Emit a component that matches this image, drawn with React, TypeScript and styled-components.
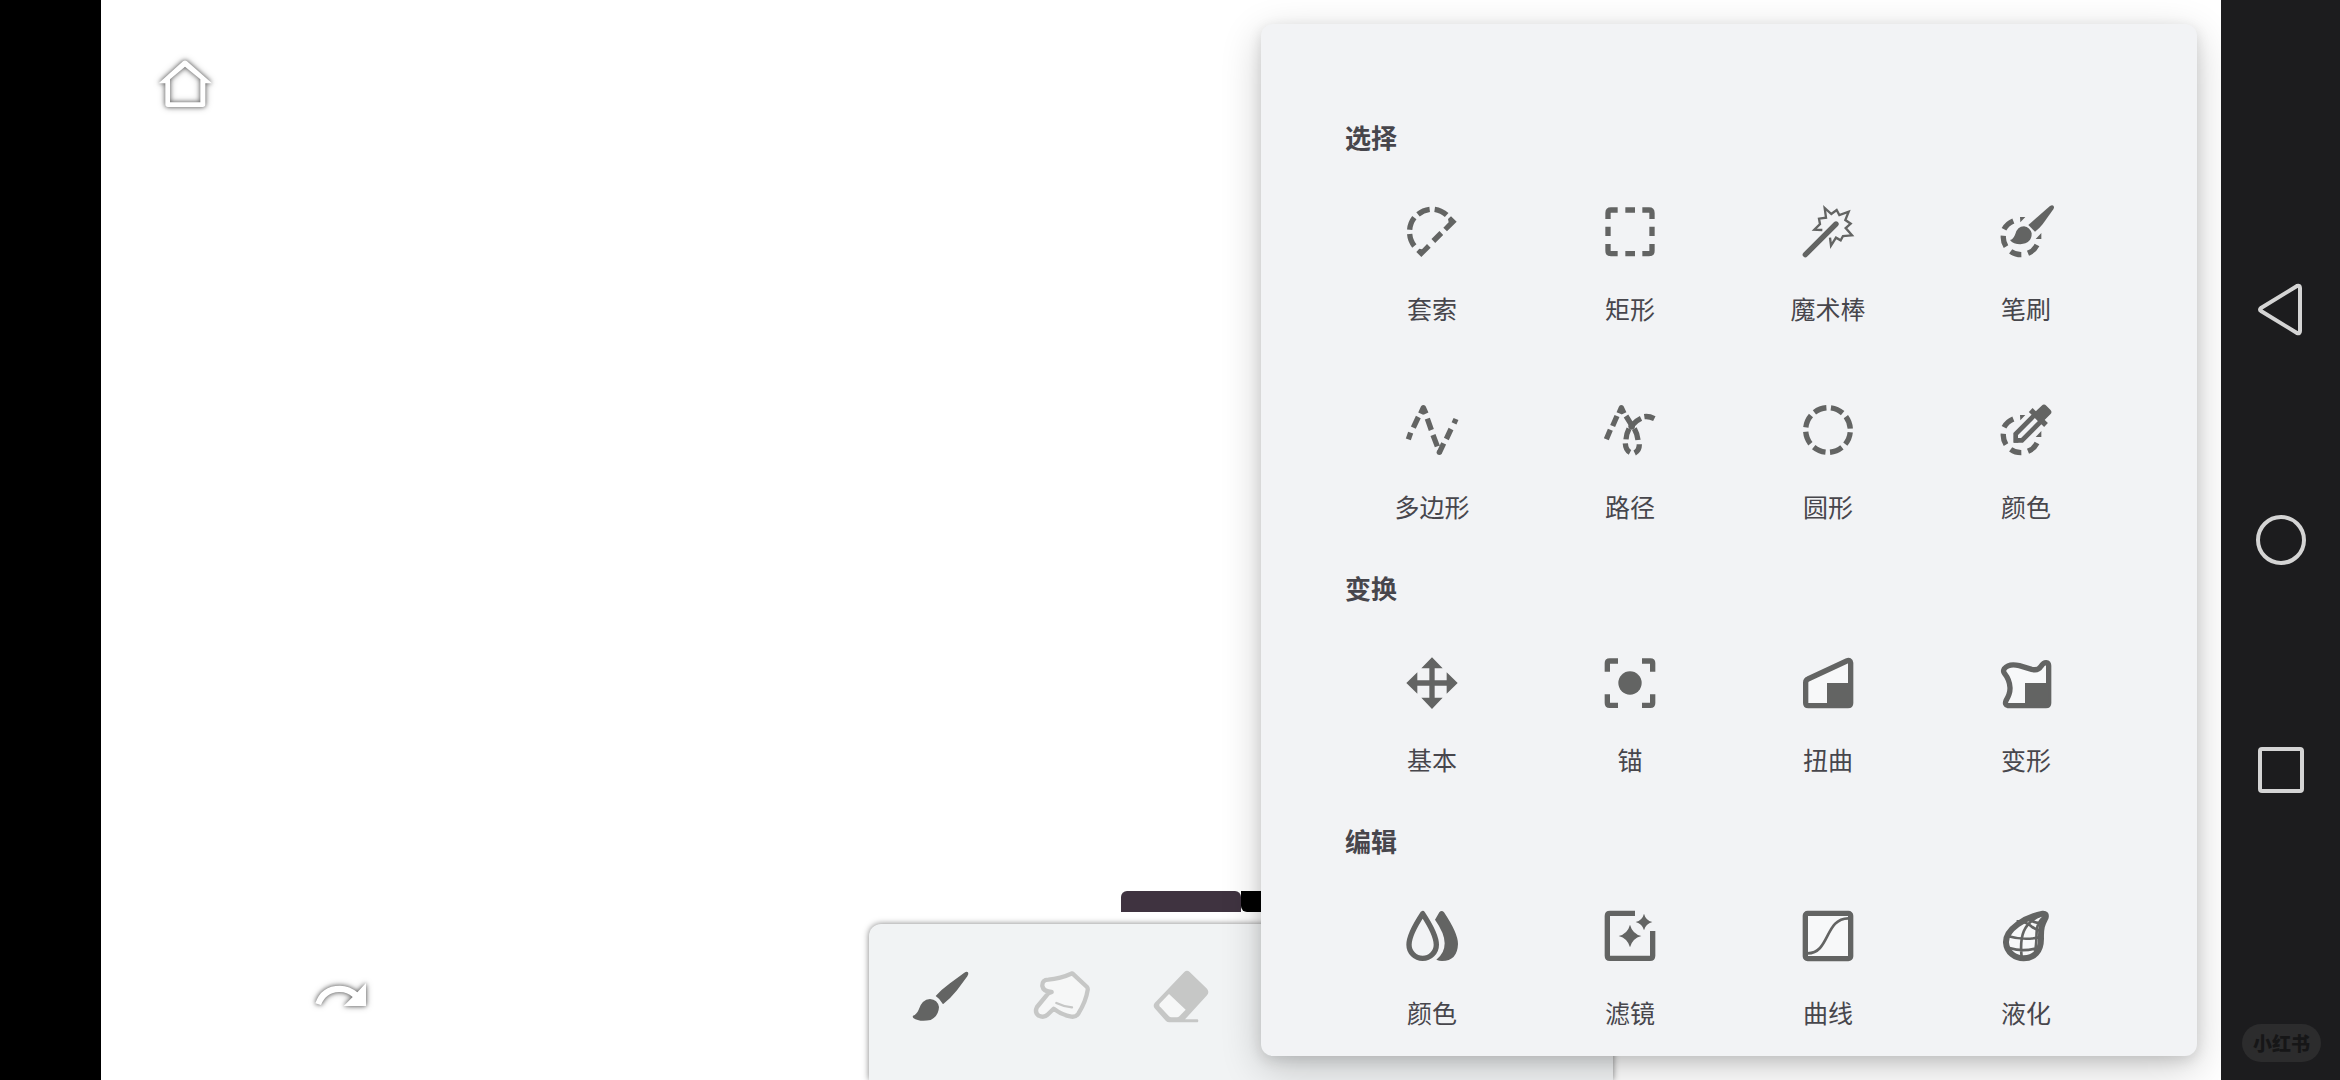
import React from "react";
import styled, { createGlobalStyle } from "styled-components";

const INK = "#636463";
const MUTED = "#c6c7c6";
const PANEL = "#f2f3f5";

const GlobalStyle = createGlobalStyle`
  * { box-sizing: border-box; }
  body {
    margin: 0;
    background: #fff;
    color: #47464c;
    font-family: "Noto Sans CJK SC", "Noto Sans", sans-serif;
  }
`;

const Screen = styled.div`
  display: grid;
  grid-template-columns: 101px minmax(0, 1fr) 119px;
  height: 100vh;
  overflow: hidden;
`;

const Cutout = styled.div`
  background: #000;
`;

const Canvas = styled.main`
  position: relative;
  display: flex;
  flex-direction: column;
  justify-content: space-between;
  overflow: hidden;
  background: #fff;
`;

const TopBar = styled.header`
  padding: 52px;
  display: flex;
`;

const BottomBar = styled.footer`
  padding-left: 160px;
  display: grid;
  grid-template-columns: minmax(0, 1fr) 744px minmax(0, 1fr);
  align-items: end;
`;

const GhostButton = styled.button`
  display: flex;
  width: 64px;
  height: 64px;
  padding: 0;
  border: 0;
  background: none;
  cursor: pointer;
  filter: drop-shadow(0 0 2px rgba(0, 0, 0, 0.5)) drop-shadow(0 0 3px rgba(0, 0, 0, 0.35));
`;

const History = styled.div`
  padding: 0 48px 54px;
`;

const Dock = styled.div`
  display: flex;
  flex-direction: column;
  align-items: center;
  gap: 12px;
`;

const Swatches = styled.div`
  display: flex;
`;

const Swatch = styled.button<{ $color: string; $edge: "top" | "bottom" }>`
  width: 120px;
  height: 21px;
  padding: 0;
  border: 0;
  background: ${(p) => p.$color};
  border-radius: ${(p) => (p.$edge === "top" ? "6px 6px 0 0" : "0 0 6px 6px")};
  cursor: pointer;
`;

const Toolbar = styled.div`
  align-self: stretch;
  display: flex;
  height: 156px;
  padding: 0 12px 12px;
  border-radius: 12px 12px 0 0;
  background: #f1f3f4;
  box-shadow: 0 0 6px rgba(0, 0, 0, 0.5);
`;

const ToolButton = styled.button`
  display: flex;
  align-items: center;
  justify-content: center;
  width: 120px;
  padding: 0;
  border: 0;
  background: none;
  cursor: pointer;
`;

const Panel = styled.section`
  position: absolute;
  top: 24px;
  right: 24px;
  bottom: 24px;
  width: 936px;
  padding: 86px 72px 0;
  overflow: hidden;
  border-radius: 12px;
  background: ${PANEL};
  box-shadow: 0 4px 14px rgba(0, 0, 0, 0.12), 0 12px 40px rgba(0, 0, 0, 0.2);
`;

const Heading = styled.h2`
  margin: 0;
  padding: 0 12px 2px;
  font-size: 26px;
  font-weight: 700;
  line-height: 53px;
`;

const Tiles = styled.div`
  display: grid;
  grid-template-columns: repeat(4, 1fr);
`;

const Tile = styled.button`
  display: flex;
  flex-direction: column;
  align-items: center;
  gap: 30px;
  height: 198px;
  padding: 39px 0 0;
  border: 0;
  background: none;
  color: inherit;
  font-family: inherit;
  font-size: 25px;
  line-height: 36px;
  cursor: pointer;
`;

const Glyph = styled.svg<{ $size: number; $color: string }>`
  display: block;
  flex: none;
  width: ${(p) => p.$size}px;
  height: ${(p) => p.$size}px;
  color: ${(p) => p.$color};
`;

const NavBar = styled.nav`
  position: relative;
  display: flex;
  flex-direction: column;
  align-items: center;
  justify-content: center;
  gap: 167px;
  background: #1c1c1e;
`;

const NavButton = styled.button`
  display: flex;
  width: 64px;
  height: 64px;
  padding: 0;
  border: 0;
  background: none;
  cursor: pointer;
`;

const Watermark = styled.span`
  position: absolute;
  right: 19px;
  bottom: 18px;
  padding: 0 11px;
  border-radius: 19px;
  background: #2c2c2d;
  color: #161617;
  font-size: 19px;
  font-weight: 900;
  line-height: 38px;
`;

/* Tool glyphs are drawn on a 168-unit grid; x and y give the grid's origin. */
function Icon(props: { x: number; y: number; children: React.ReactNode }) {
  return (
    <Glyph
      $size={56}
      $color={INK}
      viewBox={`${props.x} ${props.y} 168 168`}
      fill="none"
      stroke="currentColor"
      strokeWidth={16}
      aria-hidden="true"
    >
      {props.children}
    </Glyph>
  );
}

const PartialRing = () => (
  <path d="M-51 -23A55 55 0 0 1 -23 -48M-53 -4A53 53 0 0 0 -45 29M-31 43A53 53 0 0 0 1 53M21 49A53 53 0 0 0 48 24" />
);

const RingChips = () => (
  <path d="M-3 -60L13 -60L-2 -44ZM61 -12L61 6L44 6Z" fill="currentColor" stroke="none" />
);

const icons: Record<string, React.ReactNode> = {
  lasso: (
    <Icon x={222} y={312}>
      <path d="M239 402A67 67 0 0 0 253 438M239 389A67 67 0 0 1 253 353M264 343A67 67 0 0 1 299 328M314 328A67 67 0 0 1 350 345M310 423L334 399" />
      <path
        d="M354 357L363 349L380 365L351 394L340 383L356 367ZM259 456L268 446L276 448L291 432L302 443L274 471Z"
        fill="currentColor"
        stroke="none"
      />
    </Icon>
  ),
  rect: (
    <Icon x={816} y={312}>
      <path d="M834 357V339Q834 330 843 330H863M937 330H957Q966 330 966 339V357M966 432V452Q966 461 957 461H937M863 461H843Q834 461 834 452V432M886 330H915M886 461H915M834 380V408M966 380V408" />
    </Icon>
  ),
  wand: (
    <Icon x={210} y={72}>
      <path d="M318 132L226 224" strokeLinecap="round" />
      <path
        d="M277 150L253 149L270 132L267 116L288 113L284 84L304 102L320 90L328 105L356 95L346 120L362 131L347 144L366 166L339 168L332 181L318 173L303 197L300 173"
        strokeWidth={7}
      />
    </Icon>
  ),
  brush: (
    <Icon x={804} y={72}>
      <g transform="translate(873 171)">
        <PartialRing />
        <RingChips />
      </g>
      <g fill="currentColor" stroke="none">
        <path d="M959 79Q966 74 970 77Q974 81 970 88L939 131Q930 143 915 155L895 135Z" />
        <path d="M840 180Q850 179 856 162Q862 140 882 139Q900 142 905 160Q906 190 871 193Q850 193 840 180Z" />
      </g>
    </Icon>
  ),
  polygon: (
    <Icon x={222} y={66}>
      <path
        d="M235 178L242 158M250 143L265 111M272 101L280 83L288 101M292 116L304 150M309 165L322 199M328 218L341 190M349 177L363 147M372 130L378 117"
        strokeLinejoin="round"
      />
      <circle cx={328} cy={217} r={8} fill="currentColor" stroke="none" />
    </Icon>
  ),
  path: (
    <Icon x={816} y={66}>
      <path
        d="M829 178L841 149M848 138L861 108M867 100L874 83L882 100M888 108L904 134M906 136Q916 123 933 115M943 110Q957 108 973 116M897 146Q889 162 888 178M913 146Q922 162 924 180M886 190Q887 210 900 217M928 193Q928 212 914 219"
        strokeLinejoin="round"
      />
      <circle cx={905} cy={139} r={10} fill="currentColor" stroke="none" />
    </Icon>
  ),
  circle: (
    <Icon x={210} y={66}>
      <circle cx={294} cy={150} r={67} strokeDasharray="38.6 14.02" strokeDashoffset={45.6} />
    </Icon>
  ),
  picker: (
    <Icon x={804} y={66}>
      <g transform="translate(873 165)">
        <PartialRing />
        <RingChips />
      </g>
      <path d="M857 181V162L915 104L934 123L876 181Z" fill={PANEL} strokeWidth={14} />
      <path d="M902 90L948 135" />
      <path d="M911 100L935 77Q942 70 949 77L961 89Q968 96 961 103L937 127Z" fill="currentColor" stroke="none" />
      <path d="M852 174L866 188H852Z" fill="currentColor" stroke="none" />
    </Icon>
  ),
  move: (
    <Icon x={222} y={75}>
      <path d="M306 105V213M252 159H360" />
      <path
        d="M306 82L338 115H274ZM306 237L338 203H274ZM229 159L262 127V191ZM383 159L350 127V191Z"
        fill="currentColor"
        stroke="none"
      />
    </Icon>
  ),
  anchor: (
    <Icon x={816} y={75}>
      <circle cx={900} cy={159} r={35} fill="currentColor" stroke="none" />
      <path d="M864 93H839Q832 93 832 99V125M936 93H961Q968 93 968 99V125M968 193V219Q968 226 961 226H936M864 226H839Q832 226 832 219V193" />
    </Icon>
  ),
  distort: (
    <Icon x={210} y={75}>
      <path d="M227 158Q227 150 234 147L350 93Q361 88 362 99V219Q362 227 354 227H235Q227 227 227 219Z" fill="#f7f8f9" />
      <path d="M291 159H362V227H291Z" fill="currentColor" stroke="none" />
    </Icon>
  ),
  warp: (
    <Icon x={804} y={75}>
      <path
        d="M823 116Q837 99 868 107L905 118Q924 123 932 110Q940 98 948 98Q956 99 956 107V219Q956 227 948 227H834Q823 225 828 212Q841 190 840 173Q839 150 824 131Q818 124 823 116Z"
        fill="#f7f8f9"
      />
      <path d="M885 159H956V227H885Z" fill="currentColor" stroke="none" />
    </Icon>
  ),
  drops: (
    <Icon x={222} y={84}>
      <path
        d="M278 101Q237 163 237 194A41 41 0 0 0 319 194Q319 163 278 101Z"
        strokeLinejoin="round"
      />
      <path
        d="M328 97Q335 89 342 97Q384 160 384 192Q382 243 336 243Q328 243 319 239Q344 220 344 190Q344 160 315 119Z"
        fill="currentColor"
        stroke="none"
      />
    </Icon>
  ),
  filter: (
    <Icon x={816} y={84}>
      <path d="M915 100H840Q832 100 832 108V227Q832 235 840 235H960Q968 235 968 227V153" />
      <path
        d="M900 134Q907 161 934 168Q907 175 900 202Q893 175 866 168Q893 161 900 134ZM942 101Q947 121 967 126Q947 131 942 151Q937 131 917 126Q937 121 942 101Z"
        fill="currentColor"
        stroke="none"
      />
    </Icon>
  ),
  curves: (
    <Icon x={-84} y={-84}>
      <rect x={-68} y={-68} width={136} height={136} rx={7} fill="#f7f8f9" />
      <path d="M-61 52C6 52 -10 -53 61 -53" strokeWidth={8} />
    </Icon>
  ),
  liquify: (
    <Icon x={-84} y={-84}>
      <path d="M50 -67C-2 -57 -62 -20 -60 20C-58 50 -32 67 -7 67C24 67 45 46 45 8C44 -28 49 -36 59 -56Q62 -68 50 -67Z" fill="#f7f8f9" strokeWidth={18} />
      <path
        d="M-13 64C-20 0 -8 -38 44 -62M-56 0Q-5 15 44 3M-50 36Q-5 50 40 34M-28 -44Q-4 -46 16 -29Q30 -18 44 -16M0 -52Q22 -40 46 -38M27 45C38 0 20 -30 54 -58"
        strokeWidth={8}
      />
    </Icon>
  ),
};

const sections = [
  {
    title: "选择",
    tools: [
      ["套索", "lasso"],
      ["矩形", "rect"],
      ["魔术棒", "wand"],
      ["笔刷", "brush"],
      ["多边形", "polygon"],
      ["路径", "path"],
      ["圆形", "circle"],
      ["颜色", "picker"],
    ],
  },
  {
    title: "变换",
    tools: [
      ["基本", "move"],
      ["锚", "anchor"],
      ["扭曲", "distort"],
      ["变形", "warp"],
    ],
  },
  {
    title: "编辑",
    tools: [
      ["颜色", "drops"],
      ["滤镜", "filter"],
      ["曲线", "curves"],
      ["液化", "liquify"],
    ],
  },
];

export default function App() {
  return (
    <Screen>
      <GlobalStyle />
      <Cutout />
      <Canvas>
        <TopBar>
          <GhostButton aria-label="主页">
            <Glyph $size={64} $color="#fff" viewBox="219 156 192 192" aria-hidden="true">
              <path
                d="M309 184Q315 179 321 184L396 250H376V313Q376 321 368 321H264Q256 321 256 313V250H236ZM315 200L270 238V307H361V238Z"
                fill="currentColor"
                fillRule="evenodd"
              />
            </Glyph>
          </GhostButton>
        </TopBar>
        <BottomBar>
          <History>
            <GhostButton aria-label="重做">
              <Glyph $size={64} $color="#fff" viewBox="87 36 192 192" aria-hidden="true">
                <path
                  d="M106 160Q123 107 180 107Q210 108 232 127L258 99V168H191L218 141Q200 125 177 126Q138 127 123 165Z"
                  fill="currentColor"
                />
              </Glyph>
            </GhostButton>
          </History>
          <Dock>
            <Swatches>
              <Swatch $color="#3f3340" $edge="top" aria-label="当前颜色" />
              <Swatch $color="#000" $edge="bottom" aria-label="备用颜色" />
            </Swatches>
            <Toolbar>
              <ToolButton aria-label="画笔">
                <Glyph $size={64} $color={INK} viewBox="177 282 192 192" fill="currentColor" aria-hidden="true">
                  <path d="M343 308Q350 303 354 307Q357 311 352 319L321 361Q300 387 279 403Q270 386 257 378Q274 359 300 340Z" />
                  <path d="M189 437Q200 433 206 419Q216 388 240 387Q263 389 267 411Q266 438 242 450Q208 457 190 444Q187 440 189 437Z" />
                </Glyph>
              </ToolButton>
              <ToolButton aria-label="涂抹">
                <Glyph
                  $size={64}
                  $color={MUTED}
                  viewBox="537 282 192 192"
                  fill="none"
                  stroke="currentColor"
                  strokeWidth={13}
                  strokeLinejoin="round"
                  strokeLinecap="round"
                  aria-hidden="true"
                >
                  <path d="M667 310L711 351Q714 355 713 360Q708 394 685 431Q677 442 664 440Q636 435 611 416L594 433Q582 445 566 437Q553 427 561 411L594 371Q598 367 605 366Q580 365 577 348Q576 329 595 329Q630 327 667 310Z" fill="#f6f7f7" />
                  <path d="M619 399Q641 410 666 412" strokeWidth={7} />
                </Glyph>
              </ToolButton>
              <ToolButton aria-label="橡皮擦">
                <Glyph $size={64} $color={MUTED} viewBox="897 282 192 192" aria-hidden="true">
                  <path
                    d="M1003 306Q1011 299 1019 306L1071 356Q1079 366 1071 376L1005 448H1043Q1047 452 1043 457H958Q952 457 948 453L914 415Q908 407 914 399Z"
                    fill="currentColor"
                  />
                  <path d="M957 372L1007 419L988 439Q985 442 981 442H964Q960 442 957 439L929 409Q926 405 929 401Z" fill="#f6f7f7" />
                </Glyph>
              </ToolButton>
            </Toolbar>
          </Dock>
        </BottomBar>
        <Panel>
          {sections.map((section) => (
            <React.Fragment key={section.title}>
              <Heading>{section.title}</Heading>
              <Tiles>
                {section.tools.map(([label, icon]) => (
                  <Tile key={icon}>
                    {icons[icon]}
                    {label}
                  </Tile>
                ))}
              </Tiles>
            </React.Fragment>
          ))}
        </Panel>
      </Canvas>
      <NavBar>
        <NavButton aria-label="返回">
          <Glyph $size={64} $color="#d4d4d4" viewBox="0 0 64 64" fill="none" stroke="currentColor" strokeWidth={4} strokeLinejoin="round" aria-hidden="true">
            <path d="M12 31Q10 33 12 34L48 56Q51 57 51 54V11Q51 8 48 9Z" />
          </Glyph>
        </NavButton>
        <NavButton aria-label="主屏幕">
          <Glyph $size={64} $color="#d4d4d4" viewBox="0 0 64 64" fill="none" stroke="currentColor" strokeWidth={4} aria-hidden="true">
            <circle cx={32} cy={32} r={23} />
          </Glyph>
        </NavButton>
        <NavButton aria-label="最近任务">
          <Glyph $size={64} $color="#d4d4d4" viewBox="0 0 64 64" fill="none" stroke="currentColor" strokeWidth={4} aria-hidden="true">
            <rect x={11} y={10} width={42} height={42} rx={2} />
          </Glyph>
        </NavButton>
        <Watermark>小红书</Watermark>
      </NavBar>
    </Screen>
  );
}
